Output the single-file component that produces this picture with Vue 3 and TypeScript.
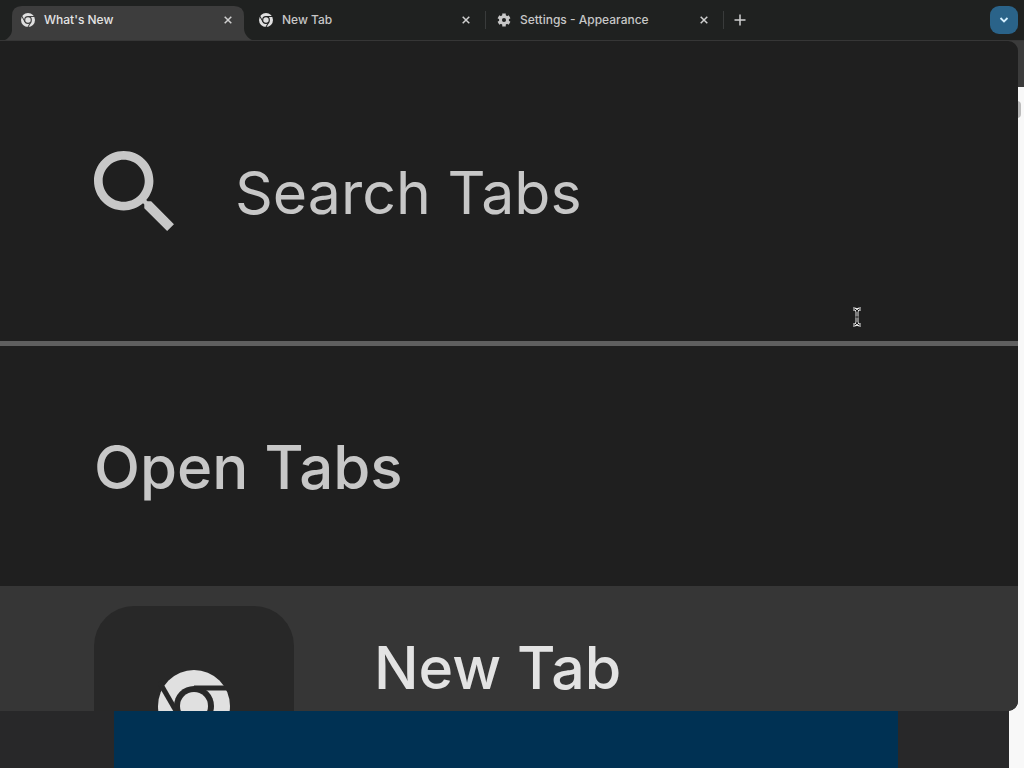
<script setup lang="ts">
import { ref } from 'vue'

interface Tab {
  title: string
  icon: 'chrome' | 'gear'
}

const tabs: Tab[] = [
  { title: "What's New", icon: 'chrome' },
  { title: 'New Tab', icon: 'chrome' },
  { title: 'Settings - Appearance', icon: 'gear' },
]
const active = ref(0)
const query = ref('')
const spokes = [0, 120, 240]
const teeth = [0, 60, 120]
</script>

<template>
  <div class="window">
    <header class="strip">
      <div
        v-for="(tab, i) in tabs"
        :key="tab.title"
        class="tab"
        :class="{ active: i === active, divided: i > active }"
      >
        <svg v-if="i === active" class="flare" viewBox="0 0 238 34" preserveAspectRatio="none" aria-hidden="true">
          <path d="M-3 34C1 32 4 28 4 24V10Q4 0 14 0H226Q236 0 236 10V22C236 28 240 32 244 34Z" />
        </svg>
        <button class="pick" type="button" @click="active = i">
          <svg v-if="tab.icon === 'chrome'" class="favicon chrome" viewBox="-36 -36 72 72" aria-hidden="true">
            <circle class="light" r="36" />
            <circle class="dark" r="20" />
            <path v-for="a in spokes" :key="a" class="gap" d="M0 -18H38" :transform="`rotate(${a})`" />
            <circle class="light" r="14" />
          </svg>
          <svg v-else class="favicon" viewBox="-12 -12 24 24" aria-hidden="true">
            <path v-for="a in teeth" :key="a" class="tooth" d="M0 -11V-6M0 6V11" :transform="`rotate(${a})`" />
            <circle class="hub" r="6" />
          </svg>
          <span>{{ tab.title }}</span>
        </button>
        <button class="close" type="button" :aria-label="`Close ${tab.title}`">
          <svg viewBox="0 0 8 8" aria-hidden="true"><path d="M0.7 0.7L7.3 7.3M7.3 0.7L0.7 7.3" /></svg>
        </button>
      </div>
      <button class="add" type="button" aria-label="New tab">
        <svg viewBox="0 0 12 12" aria-hidden="true"><path d="M6 0.5V11.5M0.5 6H11.5" /></svg>
      </button>
      <button class="search-toggle" type="button" aria-label="Search tabs">
        <svg viewBox="0 0 10 6" aria-hidden="true"><path d="M1.5 1L5 4.5L8.5 1" /></svg>
      </button>
    </header>

    <main class="page">
      <div class="toolbar"></div>
      <div class="content">
        <div class="article"><div class="banner"></div></div>
        <div class="gutter"><i class="thumb"></i></div>
      </div>
    </main>

    <section class="panel">
      <label class="search">
        <svg class="lens" viewBox="3 3 17.5 17.5" aria-hidden="true">
          <path d="M15.5 14h-.79l-.28-.27C15.41 12.59 16 11.11 16 9.5 16 5.91 13.09 3 9.5 3S3 5.91 3 9.5 5.91 16 9.5 16c1.61 0 3.09-.59 4.23-1.57l.27.28v.79l5 4.99L20.49 19l-4.99-5zm-6 .1C6.95 14.1 4.9 12.05 4.9 9.5S6.95 4.9 9.5 4.9 14.1 6.95 14.1 9.5 12.05 14.1 9.5 14.1z" />
        </svg>
        <input v-model="query" type="text" placeholder="Search Tabs" aria-label="Search Tabs" />
      </label>
      <h2>Open Tabs</h2>
      <button class="row" type="button">
        <span class="tile">
          <svg class="chrome" viewBox="-36 -36 72 72" aria-hidden="true">
            <circle class="light" r="36" />
            <circle class="dark" r="20" />
            <path v-for="a in spokes" :key="a" class="gap" d="M0 -18H38" :transform="`rotate(${a})`" />
            <circle class="light" r="14" />
          </svg>
        </span>
        <span class="name">New Tab</span>
      </button>
    </section>

    <svg class="pointer" viewBox="0 0 12 20" aria-hidden="true">
      <path class="outline" d="M2 2H3.5Q6 2.5 6 5Q6 2.5 8.5 2H10M6 5V15M2 18H3.5Q6 17.5 6 15Q6 17.5 8.5 18H10M4.5 10H7.5" />
      <path class="core" d="M2 2H3.5Q6 2.5 6 5Q6 2.5 8.5 2H10M6 5V15M2 18H3.5Q6 17.5 6 15Q6 17.5 8.5 18H10M4.5 10H7.5" />
    </svg>
  </div>
</template>

<style>
body {
  margin: 0;
  background: #282829;
}
</style>

<style scoped>
* {
  box-sizing: border-box;
}
.window {
  position: relative;
  display: flex;
  flex-direction: column;
  height: 100vh;
  overflow: hidden;
  color: #c7c7c7;
  font-family: Inter, "Liberation Sans", sans-serif;
}
button {
  padding: 0;
  border: 0;
  background: none;
  color: inherit;
  font: inherit;
  text-align: left;
}
svg {
  display: block;
  flex: none;
}
.strip {
  display: flex;
  flex: none;
  height: 41px;
  padding: 6px 6px 0 8px;
  border-bottom: 1px solid #363636;
  background: #1f2120;
}
.tab {
  --ground: #1f2120;
  position: relative;
  display: flex;
  align-items: center;
  flex: 0 1 238px;
  height: 28px;
  padding: 0 14px 0 13px;
  font-size: 12px;
  font-weight: 500;
}
.tab.active {
  --ground: #3d3d3d;
  color: #e4e4e4;
}
.tab.divided::after {
  content: "";
  position: absolute;
  top: 5px;
  right: -2px;
  width: 1px;
  height: 18px;
  background: #393b3b;
}
.flare {
  position: absolute;
  top: 0;
  left: 0;
  width: 100%;
  height: 34px;
  overflow: visible;
  fill: #3d3d3d;
}
.pick {
  position: relative;
  display: flex;
  align-items: center;
  flex: 1;
  gap: 9px;
  white-space: nowrap;
}
.pick span {
  padding-bottom: 2px;
}
.favicon {
  width: 14px;
  height: 14px;
}
.light {
  fill: #e0e0e0;
}
.dark {
  fill: var(--ground);
}
.gap {
  fill: none;
  stroke: var(--ground);
  stroke-width: 5px;
}
.tooth {
  fill: none;
  stroke: #c7c7c7;
  stroke-width: 6px;
}
.hub {
  fill: none;
  stroke: #c7c7c7;
  stroke-width: 5px;
}
.close {
  position: relative;
  padding: 4px 0;
}
.close svg {
  width: 8px;
  height: 8px;
}
.close path,
.add path {
  fill: none;
  stroke: #d0d0d0;
  stroke-width: 1.5px;
}
.add {
  display: flex;
  align-items: center;
  height: 28px;
  padding: 0 12px;
}
.add svg {
  width: 12px;
  height: 12px;
}
.search-toggle {
  display: grid;
  place-items: center;
  width: 28px;
  height: 28px;
  margin-left: auto;
  border-radius: 9px;
  background: #2a6389;
}
.search-toggle svg {
  width: 10px;
  height: 6px;
}
.search-toggle path {
  fill: none;
  stroke: #d4efff;
  stroke-width: 1.8px;
}
.page {
  display: flex;
  flex: 1;
  flex-direction: column;
}
.toolbar {
  height: 46px;
  background: #3b3b3b;
}
.content {
  display: flex;
  flex: 1;
}
.article {
  flex: 1;
  padding: 0 111px 0 114px;
  background: #282829;
}
.banner {
  height: 100%;
  background: #003153;
}
.gutter {
  width: 15px;
  padding: 14px 3px 0 0;
  background: #f8f8f8;
}
.thumb {
  display: block;
  height: 17px;
  border-radius: 4px;
  background: #bcbcbc;
}
.panel {
  position: absolute;
  top: 41px;
  right: 6px;
  bottom: 57px;
  left: 0;
  overflow: hidden;
  border-radius: 0 10px 10px 0;
  background: #1f1f1f;
  font-size: 59px;
  line-height: 72px;
}
.search {
  display: flex;
  align-items: center;
  gap: 61px;
  height: 305px;
  padding: 0 94px;
  border-bottom: 5px solid #5f5f5f;
}
.lens {
  width: 80px;
  height: 80px;
  fill: #c7c7c7;
}
input {
  flex: 1;
  min-width: 0;
  height: 80px;
  padding: 3px 0 0;
  border: 0;
  outline: 0;
  background: none;
  color: #c7c7c7;
  font: inherit;
}
input::placeholder {
  color: #c7c7c7;
  opacity: 1;
}
h2 {
  margin: 0;
  padding: 85px 94px 83px;
  font-size: 60px;
  font-weight: 500;
  line-height: 72px;
}
.row {
  --ground: #282828;
  display: flex;
  align-items: flex-start;
  gap: 80px;
  width: 100%;
  height: 240px;
  padding: 20px 94px;
  background: #363636;
  color: #e3e3e3;
  font-weight: 500;
}
.tile {
  display: grid;
  place-items: center;
  flex: none;
  width: 200px;
  height: 200px;
  border-radius: 40px;
  background: #282828;
}
.tile svg {
  width: 72px;
  height: 72px;
}
.name {
  padding-top: 26px;
}
.pointer {
  position: absolute;
  top: 307px;
  left: 851px;
  width: 12px;
  height: 20px;
}
.outline {
  fill: none;
  stroke: #e8e8e8;
  stroke-width: 3px;
}
.core {
  fill: none;
  stroke: #151515;
  stroke-width: 1px;
}
</style>
